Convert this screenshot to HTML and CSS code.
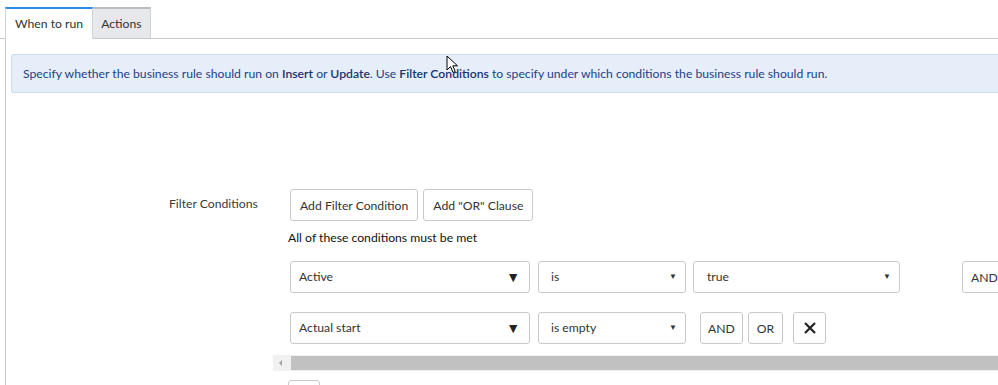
FILE: index.html
```html
<!DOCTYPE html>
<html lang="en">
<head>
    <meta charset="UTF-8">
    <title>Business Rule - When to run</title>
    <link rel="stylesheet" href="styles.css">
</head>
<body>
    <div class="tabs">
        <div class="tab active">When to run</div>
        <div class="tab">Actions</div>
    </div>

    <div class="panel">
        <div class="info">
            Specify whether the business rule should run on <b>Insert</b> or <b>Update</b>. Use <b>Filter Conditions</b> to specify under which conditions the business rule should run.
        </div>

        <div class="form-row">
            <div class="label">Filter Conditions</div>
            <div class="field">
                <div class="field-inner">
                    <div class="btn-row">
                        <button class="btn">Add Filter Condition</button>
                        <button class="btn">Add "OR" Clause</button>
                    </div>
                    <div class="hint">All of these conditions must be met</div>

                    <div class="cond">
                        <div class="select field-sel">Active<span class="arrow-big">&#9660;</span></div>
                        <div class="select op-sel">is<span class="arrow-small">&#9660;</span></div>
                        <div class="select val-sel">true<span class="arrow-small">&#9660;</span></div>
                        <button class="btn small far">AND</button>
                    </div>
                    <div class="cond">
                        <div class="select field-sel">Actual start<span class="arrow-big">&#9660;</span></div>
                        <div class="select op-sel">is empty<span class="arrow-small">&#9660;</span></div>
                        <button class="btn small and">AND</button>
                        <button class="btn small">OR</button>
                        <button class="btn small remove">
                            <svg width="14" height="14" viewBox="0 0 14 14"><path d="M2 2 L12 12 M12 2 L2 12" stroke="#222" stroke-width="2.2"/></svg>
                        </button>
                    </div>
                </div>
                <div class="hscroll">
                    <span class="hscroll-arrow"></span>
                    <div class="hscroll-thumb"></div>
                </div>
                <div class="below"><div class="stub"></div></div>
            </div>
        </div>
    </div>

    <svg class="cursor" width="14" height="20" viewBox="0 0 14 20">
        <path d="M1 1 L1 15 L4.5 11.5 L7 17.5 L9.2 16.5 L6.8 10.8 L11.5 10.8 Z" fill="#fff" stroke="#000" stroke-width="1"/>
    </svg>
</body>
</html>
```

FILE: styles.css
```css
body {
    margin: 0;
    font-family: Lato, "Liberation Sans", sans-serif;
    font-size: 12.2px;
    color: #333;
    background: #fff;
    overflow: hidden;
    position: relative;
}
.tabs {
    display: flex;
    margin-top: 7px;
    padding-left: 5px;
    border-bottom: 1px solid #c4c7cc;
}
.tab {
    height: 29px;
    line-height: 29px;
    padding: 0 8px;
    background: #e6e8eb;
    border-top: 2px solid #b9bcc0;
    border-right: 1px solid #cfd2d6;
    color: #333;
    margin-bottom: -1px;
    border-bottom: 1px solid #c4c7cc;
    font-size: 12.2px;
}
.tab.active {
    background: #fff;
    border-top-color: #2e8be6;
    border-left: 1px solid #cfd2d6;
    border-bottom-color: #fff;
    padding: 0 9px;
}
.panel {
    margin-left: 5px;
    border-left: 1px solid #c4c7cc;
    padding: 15px 0 0 5px;
}
.info {
    height: 37px;
    line-height: 37px;
    padding-left: 11px;
    background: #e5eef9;
    border: 1px solid #cadcf0;
    border-right: none;
    border-radius: 3px 0 0 3px;
    color: #253f86;
    white-space: nowrap;
}
.info b {
    font-weight: 600;
    color: #1c3170;
}
.form-row {
    display: flex;
    margin-top: 96px;
}
.label {
    width: 254px;
    padding-left: 158px;
    box-sizing: border-box;
    padding-top: 7px;
    color: #3a3a3a;
}
.field {
    margin-left: 8px;
    flex: 1;
    overflow: hidden;
}
.field-inner {
    padding-left: 15px;
    width: 760px;
}
.btn-row {
    display: flex;
    gap: 5px;
    margin-left: 2px;
}
.btn {
    height: 32px;
    padding: 0 9px;
    border: 1px solid #c8cacd;
    border-radius: 3px;
    background: #fff;
    font-family: inherit;
    font-size: 12.2px;
    color: #333;
}
.hint {
    margin-top: 8px;
    line-height: 18px;
    color: #111;
}
.cond {
    display: flex;
    align-items: center;
    margin-left: 2px;
    margin-top: 14px;
}
.cond + .cond {
    margin-top: 19px;
}
.select {
    height: 30px;
    line-height: 30px;
    border: 1px solid #c8cacd;
    border-radius: 3px;
    position: relative;
    color: #333;
    flex: none;
}
.field-sel {
    width: 230px;
    padding-left: 8px;
}
.op-sel {
    width: 134px;
    padding-left: 12px;
    margin-left: 8px;
}
.val-sel {
    width: 192px;
    padding-left: 13px;
    margin-left: 7px;
}
.arrow-big {
    position: absolute;
    right: 9px;
    top: 0;
    font-size: 14px;
    color: #222;
}
.arrow-small {
    position: absolute;
    right: 8px;
    top: -1px;
    font-size: 8px;
    color: #333;
}
.btn.small {
    flex: none;
    padding: 0 8px;
}
.btn.far {
    margin-left: 62px;
}
.btn.and {
    margin-left: 14px;
    margin-right: 5px;
    padding: 0 7px;
}
.btn.remove {
    margin-left: 10px;
    width: 33px;
    padding: 0;
    display: flex;
    align-items: center;
    justify-content: center;
}
.hscroll {
    display: flex;
    align-items: center;
    height: 16px;
    margin-top: 11px;
    background: #f1f1f1;
}
.hscroll-arrow {
    width: 0;
    height: 0;
    margin: 0 9px 0 6px;
    border-top: 3px solid transparent;
    border-bottom: 3px solid transparent;
    border-right: 3px solid #a3a3a3;
}
.hscroll-thumb {
    flex: 1;
    height: 14px;
    background: #c1c1c1;
}
.below {
    padding: 9px 0 0 15px;
}
.stub {
    width: 30px;
    height: 20px;
    border: 1px solid #c8cacd;
    border-radius: 3px;
}
.cursor {
    position: absolute;
    left: 446px;
    top: 55px;
}
```
